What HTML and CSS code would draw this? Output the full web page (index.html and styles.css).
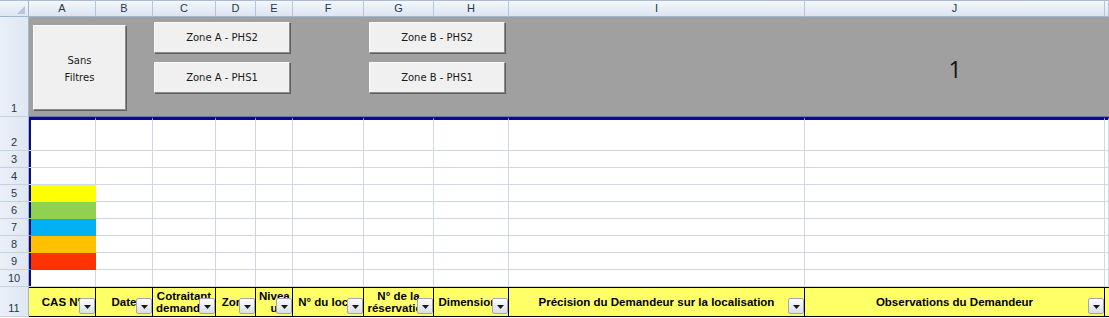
FILE: index.html
```html
<!DOCTYPE html>
<html lang="fr">
<head>
    <meta charset="UTF-8">
    <title>Suivi des réservations</title>
    <link rel="stylesheet" href="styles.css">
</head>
<body>
    <div class="sheet">
        <!-- column letters -->
        <div class="row head-row">
            <div class="corner"></div>
            <div class="col-head">A</div>
            <div class="col-head">B</div>
            <div class="col-head">C</div>
            <div class="col-head">D</div>
            <div class="col-head">E</div>
            <div class="col-head">F</div>
            <div class="col-head">G</div>
            <div class="col-head">H</div>
            <div class="col-head">I</div>
            <div class="col-head">J</div>
            <div class="col-head"></div>
        </div>

        <!-- row 1 : filter buttons -->
        <div class="row band-row">
            <div class="row-head">1</div>
            <div class="band band-main">
                <button class="btn btn-sans">Sans<br>Filtres</button>
                <div class="btn-stack">
                    <button class="btn btn-zone">Zone A - PHS2</button>
                    <button class="btn btn-zone">Zone A - PHS1</button>
                </div>
                <div class="btn-stack btn-stack-b">
                    <button class="btn btn-zone">Zone B - PHS2</button>
                    <button class="btn btn-zone">Zone B - PHS1</button>
                </div>
            </div>
            <div class="band counter">1</div>
            <div class="band"></div>
        </div>

        <!-- rows 2 to 10 are built below -->
        <div id="grid-rows"></div>

        <!-- row 11 : table headers -->
        <div class="row filter-row">
            <div class="row-head">11</div>
            <div class="fcell"><span class="label">CAS N°</span><span class="drop"></span></div>
            <div class="fcell"><span class="label">Date</span><span class="drop"></span></div>
            <div class="fcell"><span class="label">Cotraitant demandeur</span><span class="drop"></span></div>
            <div class="fcell"><span class="label">Zone</span><span class="drop"></span></div>
            <div class="fcell"><span class="label">Nivea<br>u</span><span class="drop"></span></div>
            <div class="fcell"><span class="label nowrap">N° du local</span><span class="drop"></span></div>
            <div class="fcell"><span class="label">N° de la réservation</span><span class="drop"></span></div>
            <div class="fcell"><span class="label nowrap">Dimensions</span><span class="drop"></span></div>
            <div class="fcell"><span class="label">Précision du Demandeur sur la localisation</span><span class="drop"></span></div>
            <div class="fcell"><span class="label">Observations du Demandeur</span><span class="drop"></span></div>
            <div class="fcell fcell-empty"></div>
        </div>
    </div>

    <script>
        // Build the empty rows 2 -> 10, with the colour legend in column A
        const fills = { 5: 'yellow', 6: 'green', 7: 'blue', 8: 'orange', 9: 'red' };
        const host = document.getElementById('grid-rows');

        for (let r = 2; r <= 10; r++) {
            const row = document.createElement('div');
            row.className = r === 2 ? 'row grid-row first-row' : 'row grid-row';

            const head = document.createElement('div');
            head.className = 'row-head';
            head.textContent = r;
            row.appendChild(head);

            for (let c = 0; c < 11; c++) {
                const cell = document.createElement('div');
                cell.className = 'cell';
                if (c === 0) {
                    cell.classList.add('col-a');
                    if (fills[r]) cell.classList.add('fill-' + fills[r]);
                }
                row.appendChild(cell);
            }

            host.appendChild(row);
        }

        // Little arrow inside every filter button
        document.querySelectorAll('.drop').forEach(drop => {
            drop.innerHTML = '<svg width="7" height="4" viewBox="0 0 7 4"><polygon points="0,0 7,0 3.5,4" fill="#1a1a1a"/></svg>';
        });
    </script>
</body>
</html>
```

FILE: styles.css
```css
* {
    box-sizing: border-box;
}

body {
    margin: 0;
    background: #fff;
    font-family: 'Liberation Sans', Arial, sans-serif;
    overflow: hidden;
}

.sheet {
    width: 1109px;
}

.row {
    display: grid;
    grid-template-columns: 29px 67px 57px 63px 40px 37px 71px 70px 75px 296px 300px 1fr;
}

/* column letters */
.head-row {
    height: 17px;
}

.corner {
    position: relative;
    background: linear-gradient(#f3f7fc, #dce5f1);
    border-top: 1px solid #a8bcd4;
    border-right: 1px solid #9eb6ce;
    border-bottom: 1px solid #9eb6ce;
}

.corner::after {
    content: '';
    position: absolute;
    right: 3px;
    bottom: 2px;
    width: 0;
    height: 0;
    border-left: 8px solid transparent;
    border-bottom: 8px solid #b6c6da;
}

.col-head {
    background: linear-gradient(#f5f8fc, #dbe4f0);
    border-top: 1px solid #a8bcd4;
    border-right: 1px solid #b5c6da;
    border-bottom: 1px solid #9eb6ce;
    color: #27364d;
    font-size: 11px;
    line-height: 15px;
    text-align: center;
}

/* row numbers */
.row-head {
    display: flex;
    align-items: flex-end;
    justify-content: center;
    background: linear-gradient(90deg, #eaf0f8, #dfe7f2);
    border-right: 1px solid #9eb6ce;
    border-bottom: 1px solid #c3d1e3;
    color: #27364d;
    font-size: 11px;
    line-height: 14px;
    padding-bottom: 1px;
}

/* row 1 */
.band-row {
    height: 100px;
}

.band {
    background: #a0a0a0;
    border-bottom: 1px solid #7373b8;
}

.band-main {
    grid-column: 2 / 11;
    display: flex;
    align-items: flex-start;
    padding: 5px 0 0 4px;
}

.btn {
    background: #f0f0f0;
    border: 1px solid;
    border-color: #fafafa #8a8a8a #8a8a8a #fafafa;
    box-shadow: 1px 1px 0 #606060;
    color: #1a1a1a;
    font-family: 'DejaVu Sans', Tahoma, sans-serif;
    font-size: 10px;
    line-height: 17px;
    padding: 0;
    text-align: center;
}

.btn-sans {
    width: 93px;
    height: 85px;
    margin-top: 3px;
    padding-top: 2px;
}

.btn-stack {
    display: flex;
    flex-direction: column;
    gap: 9px;
    margin-left: 28px;
}

.btn-stack-b {
    margin-left: 79px;
}

.btn-zone {
    width: 136px;
    height: 31px;
}

.counter {
    display: flex;
    align-items: center;
    justify-content: center;
    padding-top: 4px;
    color: #111;
    font-family: 'Open Sans', 'Liberation Sans', sans-serif;
    font-size: 23px;
}

/* rows 2 to 10 */
.grid-row {
    height: 17px;
}

.first-row {
    height: 34px;
}

.cell {
    background: #fff;
    border-right: 1px solid #d0d7e5;
    border-bottom: 1px solid #d0d7e5;
}

.first-row .cell {
    border-top: 3px solid #0b0b8a;
}

.col-a {
    box-shadow: inset 2px 0 0 #0b0b8a;
}

.fill-yellow { background: #ffff00; border-color: transparent; }
.fill-green  { background: #92d050; border-color: transparent; }
.fill-blue   { background: #00b0f0; border-color: transparent; }
.fill-orange { background: #ffc000; border-color: transparent; }
.fill-red    { background: #ff3300; border-color: transparent; }

/* row 11 */
.filter-row {
    height: 30px;
}

.fcell {
    position: relative;
    display: flex;
    align-items: center;
    overflow: hidden;
    background: #ffff66;
    border-top: 1px solid #000;
    border-right: 1px solid #000;
    border-bottom: 1px solid #000;
    color: #000;
    font-size: 11.5px;
    font-weight: bold;
    line-height: 12px;
    padding: 0 3px;
}

.fcell-empty {
    border-right: none;
}

.label {
    width: 100%;
    text-align: center;
}

.nowrap {
    white-space: nowrap;
}

.drop {
    position: absolute;
    right: 0;
    bottom: 2px;
    width: 16px;
    height: 16px;
    display: flex;
    align-items: center;
    justify-content: center;
    padding-top: 1px;
    background: linear-gradient(#fdfdfe, #dadee5);
    border: 1px solid #9ea7b3;
    border-radius: 2px;
}
```
